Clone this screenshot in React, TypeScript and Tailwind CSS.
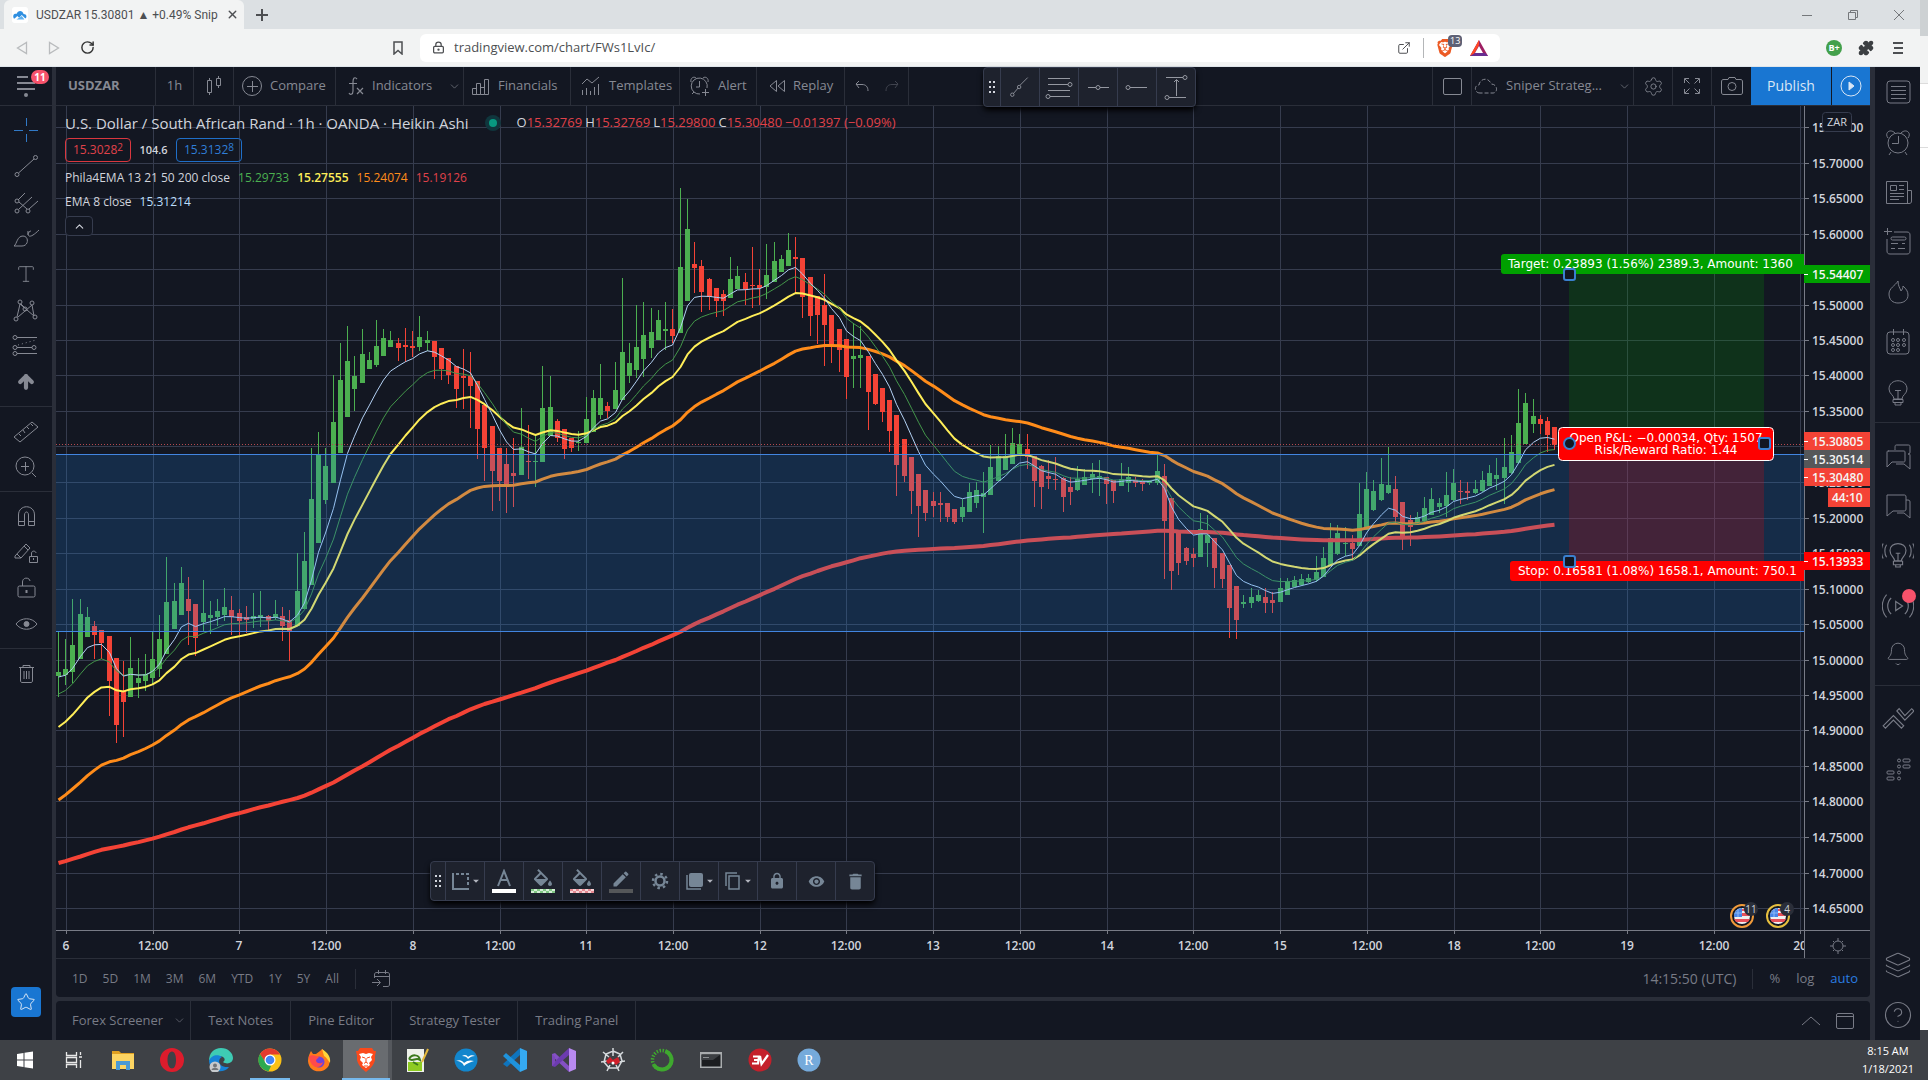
import type { ReactNode } from 'react';
import {
  AlarmClock, ArrowUp, Bell, ChevronDown, ChevronUp, CircleHelp, ExternalLink, Layers, LockKeyhole,
  Newspaper, Puzzle, RotateCw, Settings, Star, Type, X,
} from 'lucide-react';
import { MdArrowDropDown, MdDelete, MdEdit, MdLock, MdVisibility } from 'react-icons/md';
import { SiBrave } from 'react-icons/si';

// [high, open, close, low] of each bar, in chart units measured from the top
const BARS = [
  [632, 676, 672, 697], [639, 675, 669, 685], [599, 672, 645, 683], [599, 659, 614, 659], [607, 637, 617, 637],
  [621, 626, 635, 659], [630, 630, 643, 659], [636, 636, 681, 716], [658, 658, 725, 743], [661, 691, 702, 737],
  [637, 697, 668, 697], [658, 683, 678, 698], [654, 681, 674, 691], [632, 678, 659, 685], [615, 669, 639, 677],
  [557, 654, 602, 654], [583, 629, 601, 629], [567, 615, 583, 615], [577, 599, 611, 645], [604, 604, 638, 656],
  [580, 622, 613, 631], [601, 618, 615, 634], [599, 617, 611, 626], [588, 615, 607, 621], [596, 610, 617, 635],
  [609, 613, 621, 635], [606, 617, 620, 633], [593, 619, 616, 628], [591, 618, 615, 627], [615, 616, 621, 631],
  [600, 618, 614, 620], [607, 616, 626, 641], [610, 620, 632, 661], [553, 626, 591, 626], [532, 609, 561, 609],
  [448, 585, 499, 585], [432, 543, 455, 543], [448, 500, 466, 504], [375, 483, 422, 483], [343, 453, 380, 453],
  [326, 417, 361, 417], [356, 389, 376, 411], [329, 383, 354, 383], [352, 369, 360, 369], [320, 365, 346, 367],
  [329, 356, 338, 356], [331, 347, 340, 347], [338, 343, 348, 361], [328, 345, 347, 362], [331, 346, 348, 357],
  [316, 347, 337, 351], [331, 343, 340, 351], [341, 341, 357, 379], [348, 348, 369, 380], [358, 358, 375, 384],
  [366, 366, 389, 408], [349, 376, 378, 409], [352, 376, 386, 428], [381, 381, 429, 459], [405, 405, 448, 481],
  [426, 426, 471, 511], [448, 448, 481, 501], [448, 464, 484, 513], [438, 473, 476, 507], [408, 475, 447, 475],
  [425, 461, 462, 479], [435, 462, 461, 487], [366, 462, 408, 462], [376, 436, 407, 436], [419, 421, 438, 442],
  [429, 429, 449, 459], [438, 438, 448, 452], [431, 443, 442, 451], [397, 443, 419, 443], [390, 432, 398, 432],
  [364, 415, 398, 419], [402, 406, 411, 418], [362, 409, 390, 409], [278, 400, 352, 400], [343, 376, 363, 383],
  [305, 370, 347, 378], [302, 359, 335, 377], [308, 348, 332, 358], [310, 340, 320, 340], [302, 331, 329, 350],
  [309, 329, 336, 343], [188, 333, 267, 333], [199, 301, 229, 301], [242, 264, 268, 293], [260, 266, 292, 312],
  [278, 279, 297, 310], [288, 288, 301, 317], [290, 294, 301, 316], [257, 298, 279, 298], [266, 289, 276, 289],
  [273, 282, 289, 305], [247, 285, 286, 308], [269, 285, 288, 305], [244, 287, 275, 299], [242, 282, 261, 282],
  [255, 272, 259, 272], [233, 266, 250, 266], [237, 257, 259, 293], [258, 258, 297, 318], [277, 277, 316, 336],
  [296, 296, 315, 344], [274, 305, 325, 366], [315, 315, 345, 363], [329, 329, 350, 372], [339, 339, 377, 399],
  [323, 359, 356, 388], [326, 358, 355, 388], [356, 356, 392, 430], [374, 374, 404, 405], [388, 388, 412, 422],
  [400, 400, 431, 452], [415, 415, 465, 496], [439, 439, 476, 482], [457, 457, 491, 514], [474, 474, 506, 537],
  [490, 490, 513, 521], [492, 501, 506, 517], [492, 503, 505, 522], [503, 503, 517, 522], [509, 509, 522, 524],
  [499, 517, 507, 522], [483, 512, 492, 512], [482, 503, 490, 508], [472, 497, 493, 533], [445, 495, 467, 495],
  [446, 481, 456, 481], [434, 470, 456, 470], [428, 464, 443, 464], [434, 454, 444, 454], [434, 449, 457, 469],
  [456, 456, 481, 507], [465, 466, 487, 509], [460, 476, 479, 489], [457, 479, 480, 490], [477, 478, 497, 512],
  [477, 487, 492, 505], [466, 490, 479, 491], [469, 485, 477, 485], [463, 479, 474, 493], [460, 479, 476, 496],
  [477, 477, 484, 504], [480, 480, 491, 503], [463, 486, 479, 486], [467, 483, 477, 492], [477, 480, 483, 487],
  [479, 481, 484, 491], [480, 483, 481, 485], [453, 483, 471, 485], [464, 476, 521, 579], [498, 498, 571, 590],
  [533, 533, 563, 575], [547, 548, 561, 565], [548, 554, 558, 567], [513, 557, 529, 557], [515, 543, 535, 567],
  [538, 538, 568, 588], [553, 553, 579, 588], [565, 565, 608, 638], [586, 586, 620, 639], [595, 604, 602, 608],
  [588, 603, 597, 608], [590, 601, 595, 602], [588, 597, 603, 613], [592, 600, 603, 613], [578, 602, 588, 602],
  [578, 595, 581, 595], [576, 587, 580, 587], [574, 585, 579, 586], [574, 582, 578, 583], [556, 580, 572, 582],
  [547, 577, 558, 577], [523, 566, 538, 566], [525, 554, 533, 555], [527, 544, 543, 556], [535, 543, 549, 559],
  [483, 546, 514, 546], [472, 530, 489, 530], [480, 510, 491, 511], [458, 500, 484, 501], [447, 493, 485, 494],
  [476, 489, 517, 524], [502, 502, 538, 550], [515, 520, 527, 546], [512, 524, 517, 524], [497, 521, 508, 522],
  [488, 515, 499, 515], [498, 507, 503, 513], [472, 506, 495, 517], [469, 500, 483, 501], [480, 491, 492, 504],
  [482, 491, 493, 500], [480, 493, 489, 494], [471, 491, 480, 492], [465, 486, 473, 486], [458, 479, 475, 490],
  [438, 478, 467, 504], [435, 473, 452, 474], [389, 463, 423, 464], [393, 444, 403, 444], [399, 424, 416, 433],
  [415, 419, 424, 434], [417, 421, 435, 452], [427, 427, 445, 450],
];

const barX = (i: number) => Math.round(58 + i * 7.228);
const priceY = (p: number) => Math.round(128 + (15.75 - p) * 710);

function emaPath(length: number, seed: number) {
  const k = 2 / (length + 1);
  let value = seed;
  return BARS.map((bar, i) => {
    if (i > 0) value += (bar[2] - value) * k;
    return `${i ? 'L' : 'M'}${barX(i) + 0.5} ${value.toFixed(1)}`;
  }).join('');
}

const AVERAGES = [
  { length: 200, seed: 863, color: '#f44336', width: 4 },
  { length: 50, seed: 800, color: '#ff8c1a', width: 3 },
  { length: 21, seed: 727, color: '#ffee58', width: 2 },
  { length: 13, seed: 694, color: '#43964a', width: 1 },
  { length: 8, seed: 677, color: '#b4d2f5', width: 1 },
];

const PRICES = Array.from({ length: 23 }, (_, i) => 15.75 - i * 0.05);
// labels that sit fully behind a price tag
const COVERED = ['15.55000', '15.30000'];
const TIMES = ['6', '12:00', '7', '12:00', '8', '12:00', '11', '12:00', '12', '12:00', '13', '12:00', '14', '12:00', '15', '12:00', '18', '12:00', '19', '12:00', '20'];
const timeX = (i: number) => Math.round(66 + i * 86.72);

const TAGS = [
  { y: 274, text: '15.54407', color: '#00a000' },
  { y: 441, text: '15.30805', color: '#f44336' },
  { y: 459, text: '15.30514', color: '#555759' },
  { y: 477, text: '15.30480', color: '#f44336' },
  { y: 561, text: '15.13933', color: '#ff0000' },
];

function Flag({ x, count, ring }: { x: number; count: string; ring: string }) {
  return (
    <g transform={`translate(${x} 916)`}>
      <circle r="11" fill="#131722" stroke={ring} strokeWidth="2" />
      <circle r="8" fill="#f0f0f0" />
      <path d="M-8 3H8L6 6H-6ZM0 -3H7.5L8 0H0ZM0 -7H4L6 -5H0Z" fill="#e8505b" />
      <path d="M0 -8V1H-8A8 8 0 0 1 0 -8Z" fill="#4985e7" />
      <path d="M-7 -3H0M-4 -7V1" stroke="#8db9f7" />
      <circle cx="9" cy="-7" r="7" fill="#2a2e39" />
      <text x="9" y="-3" fill="#d1d4dc" fontSize="10" textAnchor="middle">{count}</text>
    </g>
  );
}

function Chart() {
  return (
    <svg className="h-full w-full" viewBox="56 106 1814 852" preserveAspectRatio="xMaxYMid slice" fontFamily="'Open Sans', sans-serif">
      <defs>
        <clipPath id="pane"><rect x="56" y="106" width="1748" height="824" /></clipPath>
        <clipPath id="timeline"><rect x="56" y="930" width="1748" height="28" /></clipPath>
      </defs>
      <g shapeRendering="crispEdges" stroke="#363c4e">
        {PRICES.map((p) => <line key={p} x1="56" x2="1804" y1={priceY(p) - 0.5} y2={priceY(p) - 0.5} />)}
        {TIMES.map((_, i) => <line key={i} x1={timeX(i) + 0.5} x2={timeX(i) + 0.5} y1="106" y2="930" />)}
      </g>
      <g clipPath="url(#pane)">
        <g shapeRendering="crispEdges">
          {BARS.map(([high, open, close, low], i) => (
            <g key={i} fill={open > close ? '#4caf50' : '#f44336'}>
              <rect x={barX(i)} y={high} width="1" height={low - high} />
              <rect x={barX(i) - 2} y={Math.min(open, close)} width="5" height={Math.max(1, Math.abs(open - close))} />
            </g>
          ))}
        </g>
        {AVERAGES.map((a) => (
          <path key={a.length} d={emaPath(a.length, a.seed)} fill="none" stroke={a.color} strokeWidth={a.width} strokeLinejoin="round" />
        ))}
        <line x1="56" x2="1804" y1="444.5" y2="444.5" stroke="#b5494f" strokeDasharray="1 2" />
        <rect x="56" y="454" width="1748" height="177" fill="#2080e3" fillOpacity="0.2" />
        <path d="M56 454.5H1804M56 631.5H1804" stroke="#4285e0" />
        <rect x="1569" y="274" width="195" height="169" fill="#00a000" fillOpacity="0.2" />
        <rect x="1569" y="443" width="195" height="119" fill="#ff0000" fillOpacity="0.2" />

        <rect x="1501" y="254" width="320" height="20" rx="3" fill="#00a000" />
        <rect x="1510" y="561" width="320" height="20" rx="3" fill="#ff0000" />
        <rect x="1558.5" y="427.5" width="215" height="33" rx="4" fill="#ff0000" stroke="#ffffff" />
        <g fill="#ffffff" fontSize="12" fontFamily="'DejaVu Sans', sans-serif">
          <text x="1508" y="268">Target: 0.23893 (1.56%) 2389.3, Amount: 1360</text>
          <text x="1518" y="575">Stop: 0.16581 (1.08%) 1658.1, Amount: 750.1</text>
          <text x="1666" y="442" textAnchor="middle">Open P&amp;L: −0.00034, Qty: 1507</text>
          <text x="1666" y="454" textAnchor="middle">Risk/Reward Ratio: 1.44</text>
        </g>
        <g fill="#131722" stroke="#3a80cf" strokeWidth="2">
          <rect x="1564" y="269" width="11" height="11" rx="2" />
          <rect x="1564" y="556" width="11" height="11" rx="2" />
          <rect x="1759" y="438" width="11" height="11" rx="2" />
          <circle cx="1569.5" cy="443.5" r="5.5" />
        </g>
        <Flag x={1742} count="11" ring="#f09a3a" />
        <Flag x={1778} count="4" ring="#e6bf3f" />
      </g>

      <path d="M1804.5 106V958M56 930.5H1870" stroke="#787b86" shapeRendering="crispEdges" />
      <g fill="#d1d4dc" fontSize="12" fontWeight="600">
        {PRICES.map((p) => (
          <g key={p}>
            <path d={`M1804 ${priceY(p) - 0.5}h5`} stroke="#787b86" />
            {!COVERED.includes(p.toFixed(5)) && <text x="1812" y={priceY(p) + 4}>{p.toFixed(5)}</text>}
          </g>
        ))}
        {TAGS.map((tag) => (
          <g key={tag.text}>
            <rect x="1804" y={tag.y - 9} width="66" height="18" fill={tag.color} />
            <path d={`M1804 ${tag.y + 0.5}h4`} stroke="#ffffff" />
            <text x="1812" y={tag.y + 5} fill="#f5f5f5">{tag.text}</text>
          </g>
        ))}
        <rect x="1828" y="488" width="42" height="19" fill="#f44336" />
        <text x="1832" y="502" fill="#f5f5f5">44:10</text>
        <g clipPath="url(#timeline)">
          {TIMES.map((t, i) => (
            <g key={i}>
              <path d={`M${timeX(i) + 0.5} 930v4`} stroke="#787b86" />
              <text x={timeX(i)} y="950" textAnchor="middle">{t}</text>
            </g>
          ))}
        </g>
      </g>
      <rect x="1822.5" y="112.5" width="29" height="19" rx="3" fill="#131722" stroke="#363c4e" />
      <text x="1837" y="126" fill="#d1d4dc" fontSize="11" textAnchor="middle">ZAR</text>
      <g fill="none" stroke="#787b86" transform="translate(1838 946)">
        <circle r="5" />
        <path d="M0 -8V-5M0 5V8M-8 0H-5M5 0H8M-5 -5L-4 -4M5 -5L4 -4M-5 5L-4 4M5 5L4 4" />
      </g>
    </svg>
  );
}

function Ico({ children, className = 'h-7 w-7' }: { children: ReactNode; className?: string }) {
  return <svg viewBox="0 0 28 28" className={className} fill="none" stroke="currentColor">{children}</svg>;
}

const LEFT_TOOLS: { name: string; top?: boolean; icon: ReactNode }[] = [
  { name: 'Crosshair', icon: <Ico><path stroke="#3179c6" d="M14.5 2V10M14.5 18V26M2 14.5H11M17 14.5H26" /></Ico> },
  { name: 'Trend line', icon: <Ico><path d="M6.5 21L22 7" /><circle cx="5" cy="22.5" r="2" /><circle cx="23.5" cy="5.5" r="2" /></Ico> },
  { name: 'Pitchfork', icon: <Ico><path d="M6 12L13 5M7 21L20 9M17 21L26 13M7 14L15 21" /><circle cx="5" cy="13" r="2" /><circle cx="5" cy="23" r="2" /><circle cx="16" cy="23" r="2" /></Ico> },
  { name: 'Brush', icon: <Ico><path d="M2 22C5 20 5 12 11 12C17 12 17 22 10 22ZM16 7C15 15 20 13 27 6M16 11C16 8 18 7 19 7" /></Ico> },
  { name: 'Text', icon: <Type size={22} strokeWidth={1} /> },
  { name: 'Patterns', icon: <Ico><path d="M5 21L8 8L22 20L20 9L6 21M9 8L13 12" /><circle cx="4" cy="23" r="2" /><circle cx="8" cy="6" r="2" /><circle cx="20" cy="7" r="2" /><circle cx="23" cy="21" r="2" /><circle cx="13" cy="13" r="2" /></Ico> },
  { name: 'Forecast', icon: <Ico><path d="M5 5.5H25M5 15.5H20M5 21.5H25" /><path strokeDasharray="1 3" d="M6 13L24 8" /><circle cx="3" cy="5.5" r="2" /><circle cx="3" cy="15.5" r="2" /><circle cx="3" cy="21.5" r="2" /><circle cx="22" cy="15.5" r="2" /></Ico> },
  { name: 'Arrow', icon: <ArrowUp size={20} strokeWidth={5} /> },
  { name: 'Measure', top: true, icon: <Ico><path d="M2 20L20 5L26 10L8 25ZM7 17L9 19M11 13L13 16M15 10L17 12M19 7L21 9" /></Ico> },
  { name: 'Zoom in', icon: <Ico><circle cx="13" cy="13" r="9" /><path d="M20 20L24 24M9 13.5H17M13.5 9V18" /></Ico> },
  { name: 'Magnet', top: true, icon: <Ico><path d="M6.5 23.5V13C6.5 2 22.5 2 22.5 13V23.5H16.5V13C16.5 9 12.5 9 12.5 13V23.5ZM6 19.5H12M17 19.5H22" /></Ico> },
  { name: 'Keep drawing', icon: <Ico><path d="M3 18L14 6L18 10L9 20H3ZM12 8L16 12M5 16L9 20M17.5 18.5H25.5V24.5H17.5ZM19.5 18V15C20 12 24 13 24 15M21.5 20V22" /></Ico> },
  { name: 'Lock', icon: <Ico><rect x="6" y="12" width="17" height="11" rx="1.5" /><path d="M10.5 12V8C10.5 3 17.5 3 18 7" /><path strokeWidth="2" d="M14.5 16V19" /></Ico> },
  { name: 'Hide', icon: <Ico><path d="M4 14C9 7 20 7 25 14C20 21 9 21 4 14Z" /><circle cx="14.5" cy="14" r="2.5" fill="currentColor" /></Ico> },
  { name: 'Delete', top: true, icon: <Ico><path d="M7 8.5H22M11 8V6.5H18V8M8.5 9V21C8.5 23 9 23.5 10 23.5H19C20 23.5 20.5 23 20.5 21V9M12 12V20M14.5 12V20M17 12V20" /></Ico> },
];

const RIGHT_TOOLS: { name: string; cell: string; icon: ReactNode }[] = [
  { name: 'Watchlist', cell: 'h-[50px]', icon: <Ico><rect x="3" y="3" width="23" height="22" rx="3" /><path d="M7 8.5H22M7 12.5H22M7 16.5H22M7 20.5H22" /></Ico> },
  { name: 'Alerts', cell: 'h-[50px]', icon: <Ico><circle cx="14" cy="15" r="10" /><path d="M14.500 8V15.500H8M7 24L5 27M21 24L23 27M4 10C0 5 6 0 11 5M24 10C28 5 22 0 17 5" /></Ico> },
  { name: 'News', cell: 'h-[50px]', icon: <Ico><path d="M2.500 3.500H23.500V25.500H2.500ZM23.500 12.500H27.500V23C27.500 25 26.500 25.500 25 25.500H22M6.500 7.500H12.500V12.500H6.500ZM15 7.500H20M15 11.500H20M6 15.500H20M6 18.500H20M6 21.500H15" /></Ico> },
  { name: 'Data window', cell: 'h-[50px]', icon: <Ico><path d="M10 4H23C25 4 26 5 26 7V23C26 25 25 26 23 26H6C4 26 3 25 3 23V11M3.5 0V7M0 3.5H8M7 15.5H14M18 15.5H21M7 20.5H11M14 20.5H21" /><rect x="7" y="9" width="15" height="3" rx="1.5" /></Ico> },
  { name: 'Hotlists', cell: 'h-[50px]', icon: <Ico><path d="M14 3C14 8 16 10 17 13C18 12 19 10 19 8C22 11 24 13 24 17C24 22 20 25 14 25C9 25 5 22 5 16C5 10 11 8 14 3Z" /></Ico> },
  { name: 'Calendar', cell: 'h-[50px]', icon: <Ico><rect x="3" y="4" width="22" height="22" rx="3" /><path d="M9.5 1V7M19.5 1V7" /><circle cx="9" cy="12" r="1.5" /><circle cx="14" cy="12" r="1.5" /><circle cx="20" cy="12" r="1.5" /><circle cx="9" cy="17" r="1.5" /><circle cx="14" cy="17" r="1.5" /><circle cx="20" cy="17" r="1.5" /><circle cx="9" cy="22" r="1.5" /><circle cx="14" cy="22" r="1.5" /></Ico> },
  { name: 'Ideas', cell: 'h-[56px] border-b pb-1', icon: <Ico><path d="M10 20C10 16 5 15 5 10C5 -1 23 -1 23 10C23 15 18 16 18 20ZM9 20.5H19V23.5H9ZM11 24V26H17V24M14 20V11M11 11.5H17" /></Ico> },
  { name: 'Public chats', cell: 'h-[58px] pt-2', icon: <Ico><path d="M4 9H19C21 9 21 9 21 11V19C21 20 20 20 19 20H8L3 25V11C3 9 3 9 5 9M24 12C26 12 26 12 26 14V27L20 22H12" /><path d="M11 8C11 3 11 3 13 3H23C26 3 26 3 26 6V10C26 12 25 12 24 12" /></Ico> },
  { name: 'Private chats', cell: 'h-[48px]', icon: <Ico><path d="M3 4H20C21 4 22 4 22 6V18C22 20 21 20 19 20H9L3 25V4M22 9C25 9 26 9 26 11V27L20 22H13" /></Ico> },
  { name: 'Ideas stream', cell: 'h-[52px]', icon: <Ico className="h-8 w-8"><path d="M11 19C11 16 7 15 7 10C7 2 21 2 21 10C21 15 17 16 17 19ZM10 19.5H18V22.5H10ZM12 23V24.5H16V23M14 19V12M12 12.5H16M4 5C2 8 2 13 4 16M1 4C-1 8 -1 13 1 17M24 5C26 8 26 13 24 16M27 4C29 8 29 13 27 17" /></Ico> },
  { name: 'Streams', cell: 'h-[50px]', icon: <Ico className="h-8 w-8"><path d="M12 10L18 14L12 18ZM8 7C4 11 4 17 8 21M4 4C-1 10 -1 18 4 24M20 7C24 11 24 17 20 21M24 4C29 10 29 18 24 24" /></Ico> },
  { name: 'Notifications', cell: 'h-[55px] border-b pb-2', icon: <Bell size={26} strokeWidth={0.9} /> },
  { name: 'Order panel', cell: 'h-[66px]', icon: <Ico className="h-8 w-8"><path d="M1 20L10 11L19 20L17 22L10 15L3 22ZM13 7L15 5L20 11L26 5L28 7L20 15Z" /></Ico> },
  { name: 'Depth of market', cell: 'h-[36px]', icon: <Ico><rect x="3" y="15" width="7" height="3" rx="1" /><rect x="3" y="21" width="7" height="3" rx="1" /><rect x="19" y="3" width="7" height="3" rx="1" /><rect x="19" y="9" width="7" height="3" rx="1" /><circle cx="15" cy="4.5" r="1.5" /><circle cx="15" cy="10.5" r="1.5" /><circle cx="15" cy="16.5" r="1.5" /><circle cx="15" cy="22.5" r="1.5" /></Ico> },
];

const headerCell = 'flex h-full shrink-0 items-center gap-2 border-r border-[#2a2e39]';
const bucket = 'M16.56 8.94L7.62 0 6.21 1.41l2.38 2.38-5.15 5.15c-.59.59-.59 1.54 0 2.12l5.5 5.5c.29.29.68.44 1.06.44s.77-.15 1.06-.44l5.5-5.5c.59-.58.59-1.53 0-2.12zM5.21 10L10 5.21 14.79 10H5.21zM19 11.5s-2 2.17-2 3.5c0 1.1.9 2 2 2s2-.9 2-2c0-1.33-2-3.5-2-3.5z';

function Grip() {
  return (
    <svg viewBox="0 0 8 12" className="h-3 w-2" fill="#d1d4dc">
      <path d="M1 0h2v2H1zM5 0h2v2H5zM1 5h2v2H1zM5 5h2v2H5zM1 10h2v2H1zM5 10h2v2H5z" />
    </svg>
  );
}

function BrowserBar() {
  return (
    <header className="text-[#4d4f52]">
      <div className="flex h-[29px] items-stretch bg-[#dce0e3]">
        <div className="ml-1 flex w-60 items-center gap-2 rounded-t-md bg-[#f2f3f3] pl-2 pr-2 font-[Roboto,sans-serif] text-xs">
          <svg viewBox="0 0 18 18" className="h-4 w-4 shrink-0">
            <rect width="18" height="18" rx="3" fill="#fff" />
            <path d="M2 13C0 8 4 7 5 8C7 3 12 4 13 8C17 8 17 12 15 13L11 9L8 12L6 10L3 13Z" fill="#2f8fe0" />
            <path d="M5 14L8 12L11 10L14 14Z" fill="#5cb0f0" />
          </svg>
          <span className="flex-1 whitespace-nowrap">USDZAR 15.30801 ▲ +0.49% Snip</span>
          <button aria-label="Close tab"><X size={13} strokeWidth={2.5} /></button>
        </div>
        <button aria-label="New tab" className="ml-3">
          <svg viewBox="0 0 12 12" className="h-3 w-3"><path d="M6 0V12M0 6H12" stroke="#4d4f52" strokeWidth="2" /></svg>
        </button>
        <div className="ml-auto flex items-center pr-4">
          <button aria-label="Minimize" className="mr-9"><svg viewBox="0 0 10 10" className="h-[10px] w-[10px]"><path d="M0 5.5H10" stroke="#75787b" /></svg></button>
          <button aria-label="Restore" className="mr-9"><svg viewBox="0 0 10 10" className="h-[10px] w-[10px]" fill="none" stroke="#75787b"><path d="M.5 2.5H7.5V9.5H.5ZM2.5 2V.5H9.5V7.5H8" /></svg></button>
          <button aria-label="Close"><svg viewBox="0 0 10 10" className="h-[10px] w-[10px]"><path d="M0 0L10 10M10 0L0 10" stroke="#75787b" /></svg></button>
        </div>
      </div>
      <div className="flex h-[38px] items-center border-b border-[#dfe5ea] bg-[#f2f3f3]">
        <div className="flex w-96 items-center gap-5 pl-4">
          <button aria-label="Back"><svg viewBox="0 0 12 14" className="h-[14px] w-3"><path d="M10.5 1.5V12.5L1.5 7Z" fill="none" stroke="#b9bbbd" strokeWidth="1.3" /></svg></button>
          <button aria-label="Forward"><svg viewBox="0 0 12 14" className="h-[14px] w-3"><path d="M1.5 1.5V12.5L10.5 7Z" fill="none" stroke="#b9bbbd" strokeWidth="1.3" /></svg></button>
          <button aria-label="Reload"><RotateCw size={15} strokeWidth={2.3} className="text-[#333]" /></button>
        </div>
        <button aria-label="Bookmark" className="ml-2 mr-4"><svg viewBox="0 0 12 14" className="h-[14px] w-3"><path d="M2 1H10V13L6 9.5L2 13Z" fill="none" stroke="#4d4f52" strokeWidth="1.5" /></svg></button>
        <div className="flex h-7 flex-1 items-center rounded-md bg-white pl-3 pr-3">
          <LockKeyhole size={13} strokeWidth={2.3} />
          <input aria-label="Address" readOnly value="tradingview.com/chart/FWs1LvIc/" className="ml-[9px] min-w-0 flex-1 text-[13px] outline-none" />
          <ExternalLink size={14} strokeWidth={1.7} />
          <span className="mx-3 h-5 w-px bg-[#b4b6b8]" />
          <span className="relative">
            <SiBrave size={18} color="#ec5a24" />
            <span className="absolute -top-1 left-3 rounded bg-[#5e6175] px-[2px] text-[9px] leading-3 text-white">13</span>
          </span>
          <svg viewBox="0 0 18 16" className="ml-4 h-4 w-[18px]">
            <path d="M9 0L18 16H0Z" fill="#9e1f63" /><path d="M9 0L0 16H3L9 5Z" fill="#ff4724" /><path d="M0 16H18L15 13H5Z" fill="#662d91" /><path d="M9 6L13 13H5Z" fill="#fff" />
          </svg>
        </div>
        <div className="ml-[326px] flex items-center gap-4 pr-[14px]">
          <span className="flex h-4 w-4 items-center justify-center rounded-full bg-[#43a04b] text-[9px] font-bold text-white">B+</span>
          <Puzzle size={16} fill="#3c3f42" className="text-[#3c3f42]" />
          <button aria-label="Browser menu" className="flex w-4 justify-center"><svg viewBox="0 0 10 12" className="h-3 w-[10px]"><path d="M0 1H10M1 6H10M0 11H10" stroke="#4d4f52" strokeWidth="1.8" /></svg></button>
        </div>
      </div>
    </header>
  );
}

function ChartHeader() {
  return (
    <div className="flex h-[39px] shrink-0 items-center border-b border-[#2a2e39] text-[13px] text-[#868993]">
      <button className={`${headerCell} w-[100px] pl-3 font-bold`}>USDZAR</button>
      <button className={`${headerCell} w-[38px] justify-center`}>1h</button>
      <button aria-label="Bar style" className={`${headerCell} w-10 justify-center`}>
        <svg viewBox="0 0 14 20" className="h-5 w-[14px]" fill="none" stroke="currentColor"><path d="M.5 4.5H4.5V16.5H.5ZM2.5 2V4M2.5 17V19M9.5 2.5H13.5V9.5H9.5ZM11.5 0V2M11.5 10V12" /></svg>
      </button>
      <button className={`${headerCell} w-[102px] pl-2`}>
        <svg viewBox="0 0 20 20" className="h-5 w-5" fill="none" stroke="currentColor"><circle cx="10" cy="10" r="9.5" /><path d="M10.5 5V16M5 10.5H16" /></svg>
        Compare
      </button>
      <button className={`${headerCell} w-32 pl-3`}>
        <svg viewBox="0 0 16 20" className="h-5 w-4" fill="none" stroke="currentColor" strokeWidth="1.2"><path d="M9 3C6 0 5 3 5 6V15C5 19 2 19 1 17M1 7.5H9M9 12L15 18M15 12L9 18" /></svg>
        Indicators
        <ChevronDown size={13} strokeWidth={1.2} className="ml-2" />
      </button>
      <button className={`${headerCell} w-[107px] pl-2`}>
        <svg viewBox="0 0 18 18" className="h-[18px] w-[18px]" fill="none" stroke="currentColor"><path d="M.5 11.5H4.5V17.5H.5ZM4.5 6.5H8.5V17.5H4.5ZM8.5 10.5H12.5V17.5H8.5ZM12.5 2.5H16.5V17.5H12.5Z" /></svg>
        Financials
      </button>
      <button className={`${headerCell} w-[109px] pl-[10px]`}>
        <svg viewBox="0 0 20 20" className="h-5 w-5" fill="none" stroke="currentColor"><path d="M1 8L6 3L11 7L18 1M1.5 14V19M5.5 12V19M9.5 15V19M13.5 11V19M17.5 8V19" /></svg>
        Templates
      </button>
      <button className={`${headerCell} w-[77px] pl-[10px] pr-2`}>
        <svg viewBox="0 0 20 20" className="h-5 w-5 shrink-0" fill="none" stroke="currentColor"><path d="M10 18A8 8 0 1 1 17 12M9.5 5V11H6M1 6C0 2 4 0 6 2M18 6C19 2 15 0 13 2M4 16L2 18M15.5 13V20M12 16.5H19" /></svg>
        Alert
      </button>
      <button className={`${headerCell} w-[88px] pl-3`}>
        <svg viewBox="0 0 16 14" className="h-[14px] w-4" fill="none" stroke="currentColor"><path d="M7.5 1.5V12.5L1 7ZM15.5 1.5V12.5L9 7Z" /></svg>
        Replay
      </button>
      <div className={`${headerCell} w-16 justify-center gap-4`}>
        <button aria-label="Undo"><svg viewBox="0 0 14 12" className="h-3 w-[14px]" fill="none" stroke="currentColor"><path d="M4 1L1 4L4 8M1 4.5H7C11 4.5 13 7 13 11" /></svg></button>
        <button aria-label="Redo" className="opacity-40"><svg viewBox="0 0 14 12" className="h-3 w-[14px]" fill="none" stroke="currentColor"><path d="M10 1L13 4L10 8M13 4.5H7C3 4.5 1 7 1 11" /></svg></button>
      </div>
      <div className="ml-auto flex h-full">
        <button aria-label="Layout" className={`${headerCell} w-10 justify-center border-l`}><span className="h-[17px] w-[19px] rounded-[2px] border border-[#868993]" /></button>
        <button className={`${headerCell} w-[162px] justify-center gap-1`}>
          <svg viewBox="0 0 24 20" className="h-5 w-6" fill="none" stroke="currentColor" strokeDasharray="4 2"><path d="M6 17C0 17 0 9 5 9C6 2 15 1 17 8C24 8 24 17 19 17Z" /></svg>
          Sniper Strateg...
          <ChevronDown size={13} strokeWidth={1.2} className="ml-2" />
        </button>
        <button aria-label="Settings" className={`${headerCell} w-[39px] justify-center`}><Settings size={21} strokeWidth={1} /></button>
        <button aria-label="Fullscreen" className={`${headerCell} w-[39px] justify-center`}>
          <svg viewBox="0 0 18 18" className="h-[18px] w-[18px]" fill="none" stroke="currentColor"><path d="M1.5 6V1.5H6M12 1.5H16.5V6M16.5 12V16.5H12M6 16.5H1.5V12M2 2L6.5 6.5M16 2L11.5 6.5M2 16L6.5 11.5M16 16L11.5 11.5" /></svg>
        </button>
        <button aria-label="Snapshot" className={`${headerCell} w-[39px] justify-center border-r-0`}>
          <svg viewBox="0 0 22 18" className="h-[18px] w-[22px]" fill="none" stroke="currentColor"><path d="M7 2.5L8 .5H14L15 2.5H19C21 2.5 21.5 3 21.5 5V15C21.5 17 21 17.5 19 17.5H3C1 17.5 .5 17 .5 15V5C.5 3 1 2.5 3 2.5Z" /><circle cx="11" cy="9.5" r="4" /></svg>
        </button>
        <button className="w-20 bg-[#1976d2] text-sm text-[#d9e6f5]">Publish</button>
        <button aria-label="Stream" className="ml-px flex w-[38px] items-center justify-center bg-[#1976d2] text-[#d9e6f5]">
          <svg viewBox="0 0 22 22" className="h-[22px] w-[22px]" fill="none" stroke="currentColor"><circle cx="11" cy="11" r="10" /><path d="M9 7L14 11L9 15Z" fill="currentColor" /></svg>
        </button>
      </div>
    </div>
  );
}

function FavoriteTools() {
  const cell = 'flex w-[39px] items-center justify-center border-l border-[#363c4e]';
  return (
    <div className="absolute -top-[39px] left-[927px] flex h-10 rounded border border-[#363c4e] bg-[#1e222d] text-[#9598a1] shadow-md shadow-black">
      <span className="flex w-4 items-center justify-center"><Grip /></span>
      <button aria-label="Trend angle" className={cell}><Ico className="h-6 w-6"><path d="M6 22L12 15M14 12L23 3" /><circle cx="5" cy="23" r="2" /><circle cx="13" cy="14" r="2" /></Ico></button>
      <button aria-label="Fib retracement" className={cell}><Ico><path d="M3 5.5H25M3 11.5H23M3 17.5H25M5 23.5H25" /><circle cx="25" cy="11.5" r="2" /><circle cx="3" cy="23.5" r="2" /></Ico></button>
      <button aria-label="Horizontal line" className={cell}><Ico><path d="M4 14.5H12M16 14.5H25" /><circle cx="14" cy="14.5" r="2" /></Ico></button>
      <button aria-label="Horizontal ray" className={cell}><Ico><path d="M7 14.5H24" /><circle cx="5" cy="14.5" r="2" /></Ico></button>
      <button aria-label="Price range" className={cell}><Ico><path d="M4 4.5H21M7 24.5H24M14.5 23V7M12 9L14.5 6.5L17 9" /><circle cx="23" cy="4.5" r="2" /><circle cx="5" cy="24.5" r="2" /></Ico></button>
    </div>
  );
}

function Legend() {
  const quote = 'flex h-6 w-[66px] items-center justify-center rounded border text-xs';
  return (
    <div className="absolute left-[9px] top-[5px] flex flex-col text-xs text-[#d1d4dc]">
      <div className="flex h-6 items-center">
        <h1 className="whitespace-pre text-[15px] font-medium">U.S. Dollar / South African Rand · 1h · OANDA · Heikin Ashi</h1>
        <span className="mx-4 flex h-4 w-4 items-center justify-center rounded-full bg-[#10363d]"><i className="h-2 w-2 rounded-full bg-[#089981]" /></span>
        <p className="flex gap-[3px] text-[13px] text-[#e0424a]">
          <span><b className="font-normal text-[#d1d4dc]">O</b>15.32769</span>
          <span><b className="font-normal text-[#d1d4dc]">H</b>15.32769</span>
          <span><b className="font-normal text-[#d1d4dc]">L</b>15.29800</span>
          <span><b className="font-normal text-[#d1d4dc]">C</b>15.30480</span>
          <span>−0.01397 (−0.09%)</span>
        </p>
      </div>
      <div className="mt-[3px] flex items-center">
        <button className={`${quote} border-[#d9373f] text-[#e0424a]`}>15.3028<span className="mb-1 text-[10px]">2</span></button>
        <span className="w-[45px] text-center text-[11px] font-semibold">104.6</span>
        <button className={`${quote} border-[#1f6fc9] text-[#2f7ed8]`}>15.3132<span className="mb-1 text-[10px]">8</span></button>
      </div>
      <div className="mt-1 flex h-6 items-center gap-2">
        <span className="font-medium">Phila4EMA 13 21 50 200 close</span>
        <span className="text-[#4caf50]">15.29733</span>
        <span className="font-semibold text-[#ffee58]">15.27555</span>
        <span className="text-[#ff8c1a]">15.24074</span>
        <span className="text-[#e0424a]">15.19126</span>
      </div>
      <div className="flex h-6 items-center gap-2">
        <span className="font-medium">EMA 8 close</span>
        <span className="font-medium text-[#bbdefb]">15.31214</span>
      </div>
      <button aria-label="Collapse legend" className="mt-[2px] flex h-5 w-7 items-center justify-center rounded-sm border border-[#363c4e] bg-[#131722]"><ChevronUp size={13} /></button>
    </div>
  );
}

function DrawingToolbar() {
  const cell = 'flex w-[39px] items-center justify-center border-l border-[#363c4e]';
  const stack = `${cell} flex-col gap-[2px]`;
  return (
    <div className="absolute bottom-[57px] left-[374px] flex h-10 rounded border border-[#363c4e] bg-[#1e222d] text-[#768696] shadow-md shadow-black">
      <span className="flex w-[14px] items-center justify-center"><Grip /></span>
      <button aria-label="Template" className={cell}>
        <svg viewBox="0 0 17 17" className="h-[17px] w-[17px]" fill="none" stroke="currentColor" strokeWidth="2"><path d="M1 0V16H17" /><path strokeDasharray="3 2" d="M4 1H16V14" /></svg>
        <MdArrowDropDown size={14} className="-mr-1 text-[#b2b5be]" />
      </button>
      <button aria-label="Text color" className={stack}>
        <svg viewBox="0 0 14 18" className="h-[18px] w-[14px]" fill="none" stroke="currentColor" strokeWidth="2"><path d="M1 17L7 2L13 17M4 11H10" /></svg>
        <span className="h-1 w-6 bg-white" />
      </button>
      <button aria-label="Profit color" className={stack}>
        <svg viewBox="0 0 24 18" className="h-[18px] w-6" fill="currentColor"><path d={bucket} /></svg>
        <svg viewBox="0 0 24 4" className="h-1 w-6"><path d="M0 2H24" stroke="#d5efd6" strokeWidth="4" /><path d="M0 1H24M3 3H24" stroke="#81c784" strokeWidth="2" strokeDasharray="3 3" /></svg>
      </button>
      <button aria-label="Stop color" className={stack}>
        <svg viewBox="0 0 24 18" className="h-[18px] w-6" fill="currentColor"><path d={bucket} /></svg>
        <svg viewBox="0 0 24 4" className="h-1 w-6"><path d="M0 2H24" stroke="#f8d5d8" strokeWidth="4" /><path d="M0 1H24M3 3H24" stroke="#e58a92" strokeWidth="2" strokeDasharray="3 3" /></svg>
      </button>
      <button aria-label="Line color" className={stack}><MdEdit size={20} /><span className="-mt-[2px] h-1 w-6 bg-[#555759]" /></button>
      <button aria-label="Settings" className={cell}>
        <svg viewBox="0 0 18 18" className="h-[18px] w-[18px]" fill="none" stroke="currentColor"><circle cx="9" cy="9" r="4.500" strokeWidth="2.500" /><circle cx="9" cy="9" r="7" strokeWidth="2.500" strokeDasharray="2.500 3" /></svg>
      </button>
      <button aria-label="Visual order" className={cell}>
        <svg viewBox="0 0 17 17" className="h-[17px] w-[17px]"><rect x="3" width="14" height="14" rx="2" fill="currentColor" /><path d="M1 2V16H15" fill="none" stroke="currentColor" strokeWidth="1.500" /></svg>
        <MdArrowDropDown size={14} className="-mr-1 text-[#b2b5be]" />
      </button>
      <button aria-label="Clone" className={cell}>
        <svg viewBox="0 0 16 18" className="h-[18px] w-4" fill="none" stroke="currentColor" strokeWidth="1.500"><path d="M4 4H14V17H4ZM1 14V1H12" /></svg>
        <MdArrowDropDown size={14} className="-mr-1 text-[#b2b5be]" />
      </button>
      <button aria-label="Lock" className={cell}><MdLock size={18} /></button>
      <button aria-label="Hide" className={cell}><MdVisibility size={17} /></button>
      <button aria-label="Remove" className={cell}><MdDelete size={21} /></button>
    </div>
  );
}

function LeftToolbar() {
  return (
    <nav className="flex w-[52px] shrink-0 flex-col bg-[#131722] text-[#868993]">
      <button aria-label="Menu" className="relative flex h-[39px] shrink-0 items-center justify-center border-b border-[#2a2e39]">
        <svg viewBox="0 0 18 22" className="h-[22px] w-[18px]" fill="currentColor"><path d="M0 1H11V3H0ZM0 7H18V9H0ZM0 13H18V15H0Z" /><circle cx="9" cy="20" r="2" /></svg>
        <span className="absolute left-[31px] top-[3px] flex h-[14px] w-[18px] items-center justify-center rounded-full bg-[#f7526b] text-[10px] font-bold text-white">11</span>
      </button>
      <div className="flex flex-col pt-[6px]">
        {LEFT_TOOLS.map((tool) => (
          <div key={tool.name} className={tool.top ? 'mt-[6px] border-t border-[#2a2e39] pt-[6px]' : ''}>
            <button aria-label={tool.name} className="flex h-9 w-full items-center justify-center">{tool.icon}</button>
          </div>
        ))}
      </div>
      <button aria-label="Favorites" className="mb-[23px] ml-[11px] mt-auto flex h-[30px] w-[30px] items-center justify-center rounded bg-[#1976d2] text-[#d9e6f5]"><Star size={20} strokeWidth={1.2} /></button>
    </nav>
  );
}

function RightToolbar() {
  return (
    <nav className="flex w-[45px] shrink-0 flex-col bg-[#131722] text-[#787b86]">
      {RIGHT_TOOLS.map((tool) => (
        <button key={tool.name} aria-label={tool.name} className={`relative flex shrink-0 items-center justify-center border-[#2a2e39] ${tool.cell}`}>
          {tool.icon}
          {tool.name === 'Streams' && <i className="absolute right-1 top-2 h-[14px] w-[14px] rounded-full bg-[#f7526b]" />}
        </button>
      ))}
      <button aria-label="Object tree" className="mt-auto flex h-[50px] items-center justify-center"><Layers size={28} strokeWidth={0.9} /></button>
      <button aria-label="Help" className="flex h-[50px] items-center justify-center"><CircleHelp size={30} strokeWidth={0.9} /></button>
    </nav>
  );
}

function BottomBars() {
  const tab = 'flex h-full items-center border-r border-[#2a2e39]';
  return (
    <>
      <div className="flex h-[39px] shrink-0 items-center rounded-b border-t border-[#2a2e39] bg-[#131722] pl-4 pr-3 pt-[2px] text-xs text-[#787b86]">
        <div className="flex items-center gap-[15px]">
          {['1D', '5D', '1M', '3M', '6M', 'YTD', '1Y', '5Y', 'All'].map((range) => <button key={range}>{range}</button>)}
        </div>
        <span className="mx-4 h-5 w-px bg-[#2a2e39]" />
        <button aria-label="Go to date">
          <svg viewBox="0 0 18 18" className="h-[18px] w-[18px]" fill="none" stroke="currentColor"><path d="M2.5 8V5C2.5 3 3 2.5 5 2.5H15C17 2.5 17.5 3 17.5 5V14C17.5 16 17 16.5 15 16.5H11M3 6.5H17M6.5 0V4M13.5 0V4M0 12.5H8M5 9L8.5 12.5L5 16" /></svg>
        </button>
        <button className="ml-auto text-sm">14:15:50 (UTC)</button>
        <span className="mx-4 h-5 w-px bg-[#2a2e39]" />
        <div className="flex gap-4 text-[13px]">
          <button>%</button>
          <button>log</button>
          <button className="text-[#2a7de1]">auto</button>
        </div>
      </div>
      <div className="h-1 shrink-0 bg-[#2a2e39]" />
      <div className="flex h-[39px] shrink-0 items-center rounded-t bg-[#131722] text-[13px] text-[#787b86]">
        <button className={`${tab} gap-[10px] pl-4 pr-1`}>Forex Screener<ChevronDown size={13} strokeWidth={1.2} /></button>
        {['Text Notes', 'Pine Editor', 'Strategy Tester', 'Trading Panel'].map((label) => (
          <button key={label} className={`${tab} px-[17px]`}>{label}</button>
        ))}
        <div className="ml-auto flex items-center gap-4 pr-4">
          <button aria-label="Open panel"><svg viewBox="0 0 18 10" className="h-[10px] w-[18px]" fill="none" stroke="currentColor"><path d="M0 9L9 1L18 9" /></svg></button>
          <button aria-label="Maximize panel"><svg viewBox="0 0 18 16" className="h-4 w-[18px]" fill="none" stroke="currentColor"><rect x=".5" y=".5" width="17" height="15" rx="1.5" /><path d="M0 3.5H18" /></svg></button>
        </div>
      </div>
    </>
  );
}

const APPS: { name: string; active?: string; art: ReactNode }[] = [
  { name: 'Start', art: <path d="M4 6L10.5 5V11.5H4ZM11.5 4.8L20 3.5V11.5H11.5ZM4 12.5H10.5V19L4 18ZM11.5 12.5H20V20.5L11.5 19.2Z" fill="#fff" /> },
  { name: 'Task view', art: <path d="M4.5 4V7.5H14.5V4M4.5 20V16.5H14.5V20M4.5 9.5H14.5V14.5H4.5ZM18.5 4V7M18.5 12V20M17 9H20" fill="none" stroke="#e8e8e8" strokeWidth="1.3" /> },
  { name: 'File Explorer', art: <><path d="M1 3H8L10 5H23V12H1Z" fill="#e0a021" /><path d="M1 6H23V21H1Z" fill="#fcd462" /><path d="M5 13H19V22H15V17H9V22H5Z" fill="#4a9ad4" /></> },
  { name: 'Opera', art: <path fillRule="evenodd" d="M12 0A12 12 0 1 0 12 24A12 12 0 1 0 12 0ZM12 3.5C14.5 3.5 16 7 16 12C16 17 14.5 20.5 12 20.5C9.5 20.5 7.5 17 7.5 12C7.5 7 9.5 3.5 12 3.5Z" fill="#dd1c2c" /> },
  { name: 'Edge', art: <><path d="M12 0C19 0 24 5 24 10C24 15 18 17 14 14C18 11 14 8 10 8C5 8 2 10 0 13C0 5 5 0 12 0Z" fill="#3ecbb4" /><path d="M0 13C2 7 9 6 13 9C8 11 9 20 20 19C15 26 1 25 0 13Z" fill="#1683d8" /><circle cx="6" cy="19" r="5.5" fill="#c7c9cc" /><circle cx="6" cy="17.5" r="2" fill="#717478" /><path d="M2.5 22C3 19 9 19 9.5 22Z" fill="#717478" /></> },
  { name: 'Chrome', active: 'w-10', art: <><circle cx="12" cy="12" r="11.5" fill="#fbc116" /><path d="M2 6A11.5 11.5 0 0 1 22 6.5H12L7 14Z" fill="#e33b2e" /><path d="M2 6L8 15L13 18L10.5 23.4A11.5 11.5 0 0 1 2 6Z" fill="#2da94f" /><circle cx="12" cy="12" r="5.5" fill="#fff" /><circle cx="12" cy="12" r="4.3" fill="#4285f4" /></> },
  { name: 'Firefox', art: <><path d="M1 13C1 8 3 5 4 3L6 6H9C11 4 14 3 15 1C17 3 18 4 18 6C23 9 23 13 22 17C18 26 2 26 1 13Z" fill="#ff7a1a" /><path d="M15 1C21 5 24 9 23 15C21 12 20 10 17 8Z" fill="#ffd53a" /><circle cx="12" cy="14" r="5.5" fill="#6f42d6" /><path d="M2 8C6 6 9 8 12 9L9 12C9 16 14 16 16 14C14 22 3 21 2 8Z" fill="#ff4b4b" /></> },
  { name: 'Brave', active: 'w-12', art: <><path d="M6 0H18L20 3L22 3L21 8L21 12C20 17 16 21 12 24C8 21 4 17 3 12L3 8L2 3L4 3Z" fill="#fb4a1c" /><path d="M5 6L9 5L12 6L15 5L19 6L17 9L18 12L15 15L16 17L12 20L8 17L9 15L6 12L7 9Z" fill="#fff" /><path d="M8 9L11 10M16 9L13 10M12 10V14L10 15.5M12 14L14 15.5M10 18H14" stroke="#fb4a1c" fill="none" /></> },
  { name: 'Notepad++', art: <><path d="M2 1H19V24H2Z" fill="#eef1ea" /><path d="M3 14H17V23H3Z" fill="#8ecb22" /><path d="M4 11C7 6 14 6 15 12C11 9 8 14 4 11M8 14L13 17" fill="none" stroke="#3c7a1d" strokeWidth="2" /><path d="M23 1L17 14" stroke="#e5b93c" strokeWidth="2" /></> },
  { name: 'OpenOffice', art: <><circle cx="12" cy="12" r="11.5" fill="#1286cd" /><path d="M8 8C11 6 13 7 14 9C16 7 19 7 21 8C18 8 16 9 14 11C13 9 11 8 8 8ZM2 13C6 11 9 13 10 15C13 12 17 12 20 13C16 14 12 16 10 18C9 15 6 13 2 13Z" fill="#fff" /></> },
  { name: 'VS Code', art: <><path d="M17 0L24 3V21L17 24Z" fill="#35aaf2" /><path d="M17 0V7L4 19L0 16Z" fill="#0f74bd" /><path d="M0 8L3 5L17 17V24Z" fill="#1f93dc" /></> },
  { name: 'Visual Studio', art: <><path d="M17 0L24 3V21L17 24Z" fill="#b98af0" /><path d="M0 6L3 5L17 18V24L0 8Z" fill="#8450c4" /><path d="M17 0V7L3 19L0 18V16Z" fill="#6c3bb0" /><path d="M0 6L3 9V15L0 18Z" fill="#7b48ba" /></> },
  { name: 'Spyder', art: <><path d="M12 3L19 6L21 13L17 20H8L3 14L5 6ZM12 0V8M2 4L8 9M22 4L17 9M0 14L6 13M24 13L18 14M6 23L9 17M18 23L15 17" fill="none" stroke="#d6dadd" strokeWidth="1.5" /><path d="M5 13L9 9L12 12L17 9L19 14L15 17L11 14L7 16Z" fill="#d0202a" /><circle cx="12" cy="15" r="1.5" fill="#fff" /></> },
  { name: 'Anaconda', art: <><circle cx="12" cy="12" r="9.5" fill="none" stroke="#3fa82f" strokeWidth="4" strokeDasharray="36 60" transform="rotate(-70 12 12)" /><circle cx="12" cy="12" r="9.5" fill="none" stroke="#3fa82f" strokeWidth="3.5" strokeDasharray="1.5 1.5" /></> },
  { name: 'Terminal', art: <><rect x="1" y="4" width="22" height="16" fill="#a9acae" /><rect x="2.5" y="6.5" width="19" height="12" fill="#1b1d20" /><path d="M2.5 6.500H21.5L14 12H2.5Z" fill="#3c3f43" /><path d="M4 9.5H10" stroke="#8e9194" /></> },
  { name: 'ExpressVPN', art: <><circle cx="12" cy="12" r="11.5" fill="#c4202b" /><path d="M5 8.5H11L10 15.5H4M6 12H10M12 8L13.5 16L20 7" fill="none" stroke="#fff" strokeWidth="2.2" /></> },
  { name: 'RStudio', art: <><circle cx="12" cy="12" r="11.5" fill="#75aadb" /><text x="12" y="17" textAnchor="middle" fill="#fff" fontSize="14" fontFamily="'Liberation Serif', serif">R</text></> },
];

function Taskbar() {
  return (
    <footer className="flex h-10 shrink-0 items-stretch bg-[#3e4146] text-white">
      {APPS.map((app) => (
        <button key={app.name} aria-label={app.name} className={`relative flex w-[49px] shrink-0 items-center justify-center ${app.name === 'Brave' ? 'border-r-4 border-[#55585d] bg-[#696c70]' : ''}`}>
          <svg viewBox="0 0 24 24" className="h-6 w-6">{app.art}</svg>
          {app.active && <i className={`absolute bottom-0 h-[2px] bg-[#76b9ed] ${app.active}`} />}
        </button>
      ))}
      <div className="ml-auto flex flex-col items-center justify-center pr-[14px] text-[11px] leading-[18px]">
        <time>8:15 AM</time>
        <span>1/18/2021</span>
      </div>
    </footer>
  );
}

export default function App() {
  return (
    <div className="flex h-screen min-h-[900px] flex-col overflow-hidden bg-[#3e4146] font-['Open_Sans',sans-serif]">
      <div className="flex min-h-0 flex-1">
        <div className="flex min-w-0 flex-1 flex-col">
          <BrowserBar />
          <div className="flex min-h-0 flex-1 bg-[#2a2e39]">
            <LeftToolbar />
            <main className="ml-1 mr-[5px] flex min-w-0 flex-1 flex-col">
              <div className="flex min-h-0 flex-1 flex-col bg-[#131722]">
                <ChartHeader />
                <div className="relative min-h-0 flex-1">
                  <Chart />
                  <Legend />
                  <FavoriteTools />
                  <DrawingToolbar />
                </div>
              </div>
              <BottomBars />
            </main>
            <RightToolbar />
          </div>
        </div>
        <div className="mb-[10px] flex w-2 flex-col bg-white">
          <div className="h-9 bg-[#cdd1d3]" />
          <div className="h-12 border-b border-[#dcdcdc] bg-[#f2f3f3]" />
          <div className="h-16 border-b border-[#dcdcdc]" />
        </div>
      </div>
      <Taskbar />
    </div>
  );
}
